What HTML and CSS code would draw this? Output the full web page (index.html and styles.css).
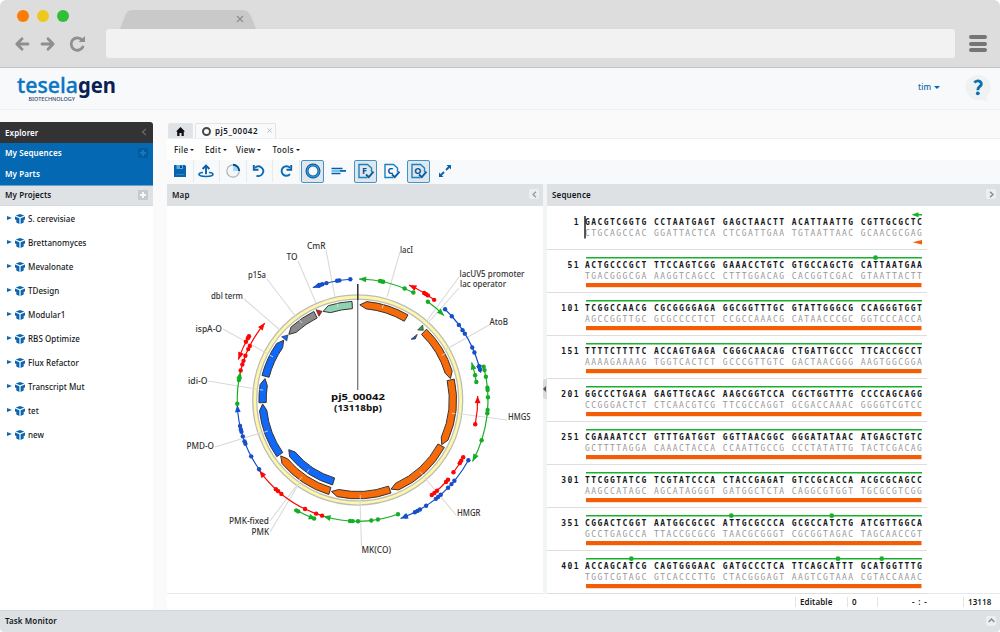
FILE: index.html
```
<!DOCTYPE html>
<html lang="en">
<head>
<meta charset="utf-8">
<title>TeselaGen</title>
<link rel="stylesheet" href="styles.css">
</head>
<body>
<svg class="defs" width="0" height="0">
  <symbol id="cube" viewBox="0 0 10 10"><path d="M5 0 9.300 1.600 5 3.300.7 1.600z"/><path d="M0 2.600 4.400 4.300V10L1.300 8.500V6L0 5.500zM10 2.600 5.600 4.300V10L8.700 8.500V6L10 5.500z"/></symbol>
</svg>
<div class="app">
  <div class="chrome">
    <div class="chrome-top">
      <i class="light orange"></i><i class="light yellow"></i><i class="light green"></i>
      <svg class="chrome-tab" width="136" height="19" viewBox="0 0 136 19"><path d="M0 19 5 6Q7 0 12 0H123Q128 0 131 6L136 19z" fill="#c9c9c9"/><path d="M117 6l6 6M123 6l-6 6" stroke="#8c8c8c" stroke-width="1.1"/></svg>
    </div>
    <div class="chrome-bar">
      <svg width="90" height="20" viewBox="0 0 90 20" fill="none" stroke="#8f8f8f" stroke-width="2.8" stroke-linecap="round" stroke-linejoin="round"><path d="M13 10H2M7 4.8 1.8 10 7 15.2"/><path d="M27 10h11M33 4.8 38.2 10 33 15.2"/><path d="M67.800 13a6.200 6.200 0 1 1-.7-7"/><path d="M63.500 8 70 2v6z" fill="#8f8f8f" stroke="none"/></svg>
      <div class="address"></div>
      <div class="burger"><i></i><i></i><i></i></div>
    </div>
  </div>

  <div class="header">
    <svg class="logo" width="110" height="40" viewBox="0 0 110 40">
      <text x="7" y="25" font-size="21.500" textLength="61" lengthAdjust="spacingAndGlyphs" fill="#0a76c2" stroke="#0a76c2" stroke-width=".35">tesela</text>
      <text x="68" y="25" font-size="21.500" font-weight="700" textLength="38" lengthAdjust="spacingAndGlyphs" fill="#0a2052">gen</text>
      <text x="18.500" y="33" font-size="5.800" textLength="46.500" lengthAdjust="spacingAndGlyphs" fill="#33466f">BIOTECHNOLOGY</text>
    </svg>
    <div class="user">tim <i class="caret"></i></div>
    <svg class="help" width="26" height="28" viewBox="0 0 26 28"><path d="M13 0a13 12.500 0 1 0 4 24.500l5.500 2-1-4.500A12.800 12.500 0 0 0 13 0z" fill="#eef2f3"/><path d="M9.300 7.500Q12.500 5 15 6.500c2.500 1.800 1.200 4.200-.5 5.300-1.200.8-1.700 1.500-1.700 3.400" fill="none" stroke="#0a70b4" stroke-width="2.800"/><circle cx="12.800" cy="18.300" r="1.900" fill="#0a70b4"/></svg>
  </div>

  <div class="main">
    <aside class="sidebar">
      <div class="side-head">Explorer<svg width="6" height="8" viewBox="0 0 6 8"><path d="M5 1 1.500 4 5 7" fill="none" stroke="#666" stroke-width="1.400"/></svg></div>
      <div class="side-blue"><span>My Sequences<b class="plus dark"></b></span><span>My Parts</span></div>
      <div class="side-proj">My Projects<b class="plus"></b></div>
      <ul class="tree" id="tree"></ul>
    </aside>

    <section class="work">
      <div class="tabs">
        <div class="tab home"><svg width="9" height="9" viewBox="0 0 9 9"><path d="M4.500 0 9 4.500H7.800V9H5.500V6h-2v3H1.200V4.500H0z" fill="#111"/></svg></div>
        <div class="tab current"><i class="ring"></i><span>pj5_00042</span><svg width="5" height="5" viewBox="0 0 5 5"><path d="M.5.5l4 4M4.500.5l-4 4" stroke="#aaa" stroke-width=".8"/></svg></div>
      </div>
      <div class="menu"><span>File<i class="caret"></i></span><span>Edit<i class="caret"></i></span><span>View<i class="caret"></i></span><span>Tools<i class="caret"></i></span></div>
      <div class="toolbar">
        <div class="tool sep"><svg viewBox="0 0 18 18"><path d="M3 3h11l1 1.500v10.500H3z" fill="#0a62ae"/><path d="M5.500 3h6.500v4H5.500z" fill="#58aee0"/><path d="M9 3.500h1.800v2.600H9z" fill="#063d79"/><path d="M5 12.500h8.500" stroke="#2586c8" stroke-width="1"/></svg></div>
        <div class="tool sep"><svg viewBox="0 0 18 18"><path d="M6 10.500C3.500 10.700 2 11.500 2 12.300c0 1.300 3 2.200 7 2.200s7-.9 7-2.200c0-.8-1.500-1.600-4-1.800" fill="none" stroke="#0a6ab4" stroke-width="1.700"/><path d="M9 12.300V4.500M5.600 7 9 3.500 12.400 7" fill="none" stroke="#0a62ae" stroke-width="1.900"/></svg></div>
        <div class="tool sep"><svg viewBox="0 0 18 18"><circle cx="9" cy="9" r="6.200" fill="#f4f6f7" stroke="#aab3b9" stroke-width="1.200"/><path d="M9 9V3a6 6 0 0 1 6 6z" fill="#9bdcf6"/><path d="M9 2.800a6.200 6.200 0 0 1 6.200 6.200" fill="none" stroke="#074f8c" stroke-width="2"/></svg></div>
        <div class="tool sep"><svg viewBox="0 0 18 18"><path d="M5 5.800a4.800 4.800 0 1 1 1.500 7.800" fill="none" stroke="#0a6ab4" stroke-width="1.900"/><path d="M3.800 3v4.700h4.700" fill="none" stroke="#0a62ae" stroke-width="1.900"/></svg></div>
        <div class="tool sep"><svg viewBox="0 0 18 18"><path d="M13 12.200a4.800 4.800 0 1 1 0-6.400" fill="none" stroke="#0a6ab4" stroke-width="1.900"/><path d="M14.200 3v4.700H9.500" fill="none" stroke="#0a62ae" stroke-width="1.900"/></svg></div>
        <div class="tool"><div class="pressed"><svg viewBox="0 0 18 18"><circle cx="9" cy="9" r="6" fill="#f7f9fb" stroke="#074f96" stroke-width="3"/><circle cx="9" cy="9" r="5.900" fill="none" stroke="#2e9bd9" stroke-width="1.400"/></svg></div></div>
        <div class="tool"><svg viewBox="0 0 18 18"><path d="M1.500 6.500h11M1.500 11.500h9" stroke="#0a5ba6" stroke-width="1.700"/><path d="M1.500 9h14.500" stroke="#54c0ed" stroke-width="1.800"/><path d="M10 8.800h6" stroke="#0a5ba6" stroke-width="1.500"/></svg></div>
        <div class="tool"><div class="pressed"><svg viewBox="0 0 18 18"><path d="M10.500 15.500H2v-13h8.500L14.500 6v4" fill="none" stroke="#1683c4" stroke-width="1.400"/><text x="5" y="12" class="glyph">F</text><path d="M9 12.500 11.800 15.200l4.700-5.500" fill="none" stroke="#075da6" stroke-width="1.900"/></svg></div></div>
        <div class="tool"><svg viewBox="0 0 18 18"><path d="M10.500 15.500H2v-13h8.500L14.500 6v4" fill="none" stroke="#1683c4" stroke-width="1.400"/><text x="4.600" y="12" class="glyph">C</text><path d="M9 12.500 11.800 15.200l4.700-5.500" fill="none" stroke="#075da6" stroke-width="1.900"/></svg></div>
        <div class="tool"><div class="pressed"><svg viewBox="0 0 18 18"><path d="M10.500 15.500H2v-13h8.500L14.500 6v4" fill="none" stroke="#1683c4" stroke-width="1.400"/><text x="4.300" y="12" class="glyph">O</text><path d="M9 12.500 11.800 15.200l4.700-5.500" fill="none" stroke="#075da6" stroke-width="1.900"/></svg></div></div>
        <div class="tool"><svg viewBox="0 0 18 18"><path d="M10 8l4-4M8 10l-4 4" stroke="#0a62ae" stroke-width="1.800"/><path d="M10.500 3H15v4.500zM3 10.500V15h4.500z" fill="#0a62ae"/></svg></div>
      </div>
      <div class="panels">
        <div class="panel map-panel">
          <div class="panel-head">Map<span class="chev"><svg width="5" height="7" viewBox="0 0 5 7"><path d="M4 .7 1 3.500 4 6.300" fill="none" stroke="#999" stroke-width="1.400"/></svg></span></div>
          <svg class="map" id="map" width="376" height="387" viewBox="167 206 376 387"></svg>
        </div>
        <div class="splitter"><i></i></div>
        <div class="panel seq-panel">
          <div class="panel-head">Sequence<span class="chev"><svg width="5" height="7" viewBox="0 0 5 7"><path d="M1 .7 4 3.500 1 6.300" fill="none" stroke="#888" stroke-width="1.400"/></svg></span></div>
          <div class="rows" id="rows"></div>
        </div>
      </div>
      <div class="status"><span class="s1">Editable</span><span class="s2">0</span><span class="s3">- : -</span><span class="s4">13118</span></div>
    </section>
  </div>
  <div class="footer">Task Monitor<span class="chev"><svg width="7" height="5" viewBox="0 0 7 5"><path d="M.7 4 3.500 1 6.300 4" fill="none" stroke="#888" stroke-width="1.400"/></svg></span></div>
</div>
<script src="app.js"></script>
</body>
</html>
```
FILE: styles.css
```
* { box-sizing: border-box; }
body { margin: 0; background: #fff; font-family: "Noto Sans", "Open Sans", sans-serif; font-size: 8px; font-weight: 600; color: #15181b; }
.defs { position: absolute; }
.app { width: 1000px; height: 632px; display: flex; flex-direction: column; overflow: hidden; background: #fafafa; border-radius: 6px 6px 4px 4px; }
.chrome { height: 68px; background: #ddd; border-bottom: 1px solid #c2c2c2; flex: none; }
.chrome-top { display: flex; height: 29px; padding: 10px 0 0 17px; gap: 8px; }
.light { width: 12px; height: 12px; border-radius: 50%; }
.orange { background: #fb7d02; }
.yellow { background: #edc81f; }
.green { background: #32be39; }
.chrome-tab { margin-left: 43px; }
.chrome-bar { display: flex; height: 29px; align-items: center; padding-left: 15px; }
.chrome-bar > svg { margin-top: 1px; }
.address { width: 849px; height: 29px; margin-left: 1px; background: #f2f2f2; border-radius: 3px; }
.burger { display: flex; flex-direction: column; gap: 2.500px; margin-left: 14px; }
.burger i { width: 18px; height: 4px; border-radius: 2px; background: #757575; }
.header { height: 42px; flex: none; display: flex; background: #f7f9fb; border-bottom: 1px solid #edf0f1; }
.logo { margin-left: 10px; font-weight: 500; }
.user { margin: 13px 0 0 798px; width: 48px; color: #0a66b0; font-size: 8px; letter-spacing: .1px; font-weight: 500; white-space: nowrap; }
.caret { display: inline-block; border: 2px solid transparent; border-top: 2.500px solid currentColor; border-bottom: 0; margin-left: 3px; vertical-align: 2px; }
.user .caret { border-left-width: 3px; border-right-width: 3px; border-top-width: 3px; margin-left: 1px; vertical-align: 1px; }
.help { margin: 7px 0 0 -1px; }
.main { flex: 1; display: flex; gap: 14px; min-height: 0; padding-top: 12px; }
.sidebar { width: 153px; background: #fff; letter-spacing: .1px; }
.side-head { height: 21px; background: #333234; color: #fff; padding: 0 6px 1px 5px; display: flex; align-items: center; justify-content: space-between; border-radius: 0 3px 0 0; }
.side-blue { background: #0469b2; color: #fff; height: 43px; display: flex; flex-direction: column; border-bottom: 1px solid #64a5d0; }
.side-blue span { height: 21px; padding: 0 5px 2px; display: flex; align-items: center; justify-content: space-between; }
.side-proj { height: 20px; background: #dfe2e5; padding: 0 5px 2px; display: flex; align-items: center; justify-content: space-between; border-bottom: 1px solid #d6dade; }
.plus { width: 10px; height: 10px; border-radius: 1px; color: #f6f7f8; background: linear-gradient(currentColor, currentColor) center / 6px 2px no-repeat, linear-gradient(currentColor, currentColor) center / 2px 6px no-repeat, #c6c9cc; }
.plus.dark { color: #0f7abf; background-color: #075a9c; }
.tree { margin: 0; padding: 0; list-style: none; font-weight: 500; letter-spacing: .05px; }
.tree li { height: 24px; display: flex; align-items: center; padding-left: 7px; }
.tree .arrow { width: 0; height: 0; border: 2.600px solid transparent; border-left: 5px solid #0a66b0; border-right: 0; }
.tree svg { width: 10px; height: 10px; margin: 2px 3px 0 3px; fill: #0a66b0; }
.work { width: 833px; display: flex; flex-direction: column; background: #f5f7f8; }
.tabs { display: flex; gap: 2px; height: 16px; padding-left: 1px; background: #fafafa; }
.tab { height: 15px; margin-top: 1px; border: 1px solid #e2e5e8; border-bottom: 0; border-radius: 2px 2px 0 0; display: flex; align-items: center; }
.home { width: 25px; justify-content: center; background: #dfe2e6; }
.current { width: 81px; background: #f8fafb; padding-left: 6px; font-weight: 600; letter-spacing: .55px; padding-bottom: 2px; }
.ring { width: 9px; height: 9px; border: 2px solid #484848; border-radius: 50%; margin: 2px 4px 0 0; flex: none; }
.current span { width: 52px; flex: none; }
.menu { height: 22px; background: #fff; border-top: 1px solid #edf0f2; display: flex; align-items: center; font-weight: 500; padding-bottom: 1px; }
.menu span { white-space: nowrap; letter-spacing: .35px; }
.menu span:nth-child(1) { margin-left: 7px; width: 31px; }
.menu span:nth-child(2) { width: 31px; }
.menu span:nth-child(3) { width: 36.500px; }
.menu .caret { margin-left: 1.500px; }
.toolbar { height: 24px; display: flex; background: #f7f9fa; }
.tool { width: 26.500px; height: 22px; display: flex; align-items: center; justify-content: center; flex: none; }
.tool svg { width: 18px; height: 18px; flex: none; }
.sep { border-right: 1px solid #e8ebed; }
.pressed { width: 23px; height: 23px; background: #e1e6ea; border: 1px solid #3d95cb; border-radius: 2px; display: flex; align-items: center; justify-content: center; flex: none; }
.glyph { font: 700 9px "Noto Sans", sans-serif; fill: #064f94; }
.panels { display: flex; height: 410px; }
.panel { display: flex; flex-direction: column; background: #fff; border-bottom: 1px solid #e6eaeb; }
.panel-head { height: 22px; flex: none; padding: 0 4px 2px 5px; background: #dde1e4; display: flex; align-items: center; justify-content: space-between; letter-spacing: .15px; }
.chev { width: 10px; height: 10px; border-radius: 2px; background: #eceeef; display: flex; align-items: center; justify-content: center; }
.map-panel { width: 376px; }
.map text { font-size: 8px; font-weight: 500; fill: #333; }
.map .title { font-size: 9.500px; font-weight: 700; fill: #111; }
.splitter { width: 4px; background: #f2f5f6; display: flex; align-items: center; }
.splitter i { width: 4px; height: 20px; background: #d7dbde; border-radius: 2px 0 0 2px; }
.splitter i::before { content: ""; display: block; margin-top: 7px; width: 0; border: 3px solid transparent; border-left: 0; border-right: 3px solid #555; }
.seq-panel { width: 453px; }
.rows { padding-top: 1px; }
.row { width: 380px; height: 43px; border-bottom: 1px solid #dedede; display: grid; grid-template-columns: 38px 1fr; position: relative; font: 700 8px/11px "DejaVu Sans Mono", monospace; letter-spacing: 1.450px; white-space: pre; padding-top: 10px; }
.row .num { width: 33px; text-align: right; }
.row .comp { color: #999; font-weight: 400; }
.row .marks { position: absolute; left: 0; top: 0; }
.status { height: 16px; background: #fff; display: flex; align-items: center; letter-spacing: .1px; justify-content: flex-end; }
.status span { height: 10px; line-height: 9px; border-left: 1px solid #e3e3e3; padding-left: 4px; white-space: nowrap; }
.s1 { width: 52px; }
.s2 { width: 30px; }
.status .s3 { width: 86px; padding-left: 34px; letter-spacing: .8px; }
.s4 { width: 37px; }
.footer { height: 22px; flex: none; background: #dde1e4; border-top: 1px solid #d3d8db; display: flex; align-items: center; justify-content: space-between; padding: 0 4px 2px 5px; letter-spacing: .1px; }
```
FILE: app.js
```
const projects = ['S. cerevisiae', 'Brettanomyces', 'Mevalonate', 'TDesign', 'Modular1', 'RBS Optimize', 'Flux Refactor', 'Transcript Mut', 'tet', 'new'];
document.getElementById('tree').innerHTML = projects.map(p =>
  `<li><i class="arrow"></i><svg><use href="#cube"/></svg>${p}</li>`).join('');

/* Sequence rows: bases, plus x positions of start codons on the reading frame line */
const rows = [
  ['GACGTCGGTG CCTAATGAGT GAGCTAACTT ACATTAATTG CGTTGCGCTC', null],
  ['ACTGCCCGCT TTCCAGTCGG GAAACCTGTC GTGCCAGCTG CATTAATGAA', [328.5]],
  ['TCGGCCAACG CGCGGGGAGA GGCGGTTTGC GTATTGGGCG CCAGGGTGGT', []],
  ['TTTTCTTTTC ACCAGTGAGA CGGGCAACAG CTGATTGCCC TTCACCGCCT', []],
  ['GGCCCTGAGA GAGTTGCAGC AAGCGGTCCA CGCTGGTTTG CCCCAGCAGG', []],
  ['CGAAAATCCT GTTTGATGGT GGTTAACGGC GGGATATAAC ATGAGCTGTC', []],
  ['TTCGGTATCG TCGTATCCCA CTACCGAGAT GTCCGCACCA ACGCGCAGCC', []],
  ['CGGACTCGGT AATGGCGCGC ATTGCGCCCA GCGCCATCTG ATCGTTGGCA', [184.3, 284.7]],
  ['ACCAGCATCG CAGTGGGAAC GATGCCCTCA TTCAGCATTT GCATGGTTTG', [84.3, 291, 334.7]]
];
const pair = { A: 'T', T: 'A', G: 'C', C: 'G', ' ': ' ' };
document.getElementById('rows').innerHTML = rows.map(([s, dots], i) => {
  const comp = [...s].map(c => pair[c]).join('');
  const marks = dots
    ? `<path d="M39 7.700H375" stroke="#18b12c" stroke-width="1.400"/>${dots.map(x => `<circle cx="${x}" cy="7.700" r="2.400" fill="#18b12c"/>`).join('')}<rect x="39" y="33" width="335.500" height="4.200" fill="#f35d05"/>`
    : '<path d="M38 9v22.500" stroke="#000" stroke-width="1.300"/><path d="M369 7.700h6" stroke="#18b12c" stroke-width="1.400"/><path d="M364.500 7.700l7-2.500v5z" fill="#18b12c"/><path d="M365.500 35.200l9.500-2.200v4.400z" fill="#f35d05"/>';
  return `<div class="row"><span class="num">${i * 50 + 1}</span><div><div>${s}</div><div class="comp">${comp}</div></div><svg class="marks" width="380" height="42">${marks}</svg></div>`;
}).join('');

/* Plasmid map */
const CX = 357.7, CY = 400;
const pt = (r, a) => [CX + r * Math.sin(a * Math.PI / 180), CY - r * Math.cos(a * Math.PI / 180)];
const P = (r, a) => pt(r, a).map(v => v.toFixed(2)).join(' ');
const angle = (x, y) => (Math.atan2(x - CX, CY - y) * 180 / Math.PI + 360) % 360;
let out = '';

const labels = [
  ['lacI', 400, 253, 13, [400, 252, 387, 297]],
  ['lacUV5 promoter', 459.5, 276.5, 65, [459, 277, 426, 322]],
  ['lac operator', 460, 287, 46, [459, 288, 428, 323]],
  ['AtoB', 489.5, 325, 18.5, [489, 325, 445, 350]],
  ['HMGS', 508, 420, 22.5, [507, 420, 454, 413]],
  ['HMGR', 457, 515.5, 23.5, [456, 515, 425, 478]],
  ['MK(CO)', 361.5, 553, 29.5, [361.5, 546, 360, 500]],
  ['PMK-fixed', 229, 524, 40, [270, 521, 297, 485]],
  ['PMK', 251.5, 534.5, 17.5, [270, 532, 300, 482]],
  ['PMD-O', 186.5, 449, 27.5, [215, 447, 264, 432]],
  ['idi-O', 188, 384, 19.5, [208, 381, 262, 390]],
  ['ispA-O', 195.5, 332, 26.5, [223, 329, 268, 354]],
  ['dbl term', 211, 299, 32, [244, 299, 280, 330]],
  ['p15a', 248, 278, 18, [267, 279, 296, 317]],
  ['TO', 286.5, 260, 11, [298, 261, 316, 303]],
  ['CmR', 307, 249, 18.5, [326, 250, 335, 297]]
];
out += `<circle cx="${CX}" cy="${CY}" r="103" fill="none" stroke="#bcbcbc" stroke-width="5.300"/><circle cx="${CX}" cy="${CY}" r="103" fill="none" stroke="#fdf7a8" stroke-width="2.800"/>`;
labels.forEach(([, , , , l]) => out += `<path d="M${l[0]} ${l[1]}L${l[2]} ${l[3]}" stroke="#dadada" stroke-width="1.100"/>`);

/* tail angle, tip angle, colour, inner radius, tick angle */
const features = [
  [30.6, 1.3, '#f56a09', 91.5, 15],
  [44.2, 77, '#f56a09', 91.5, 62],
  [77.8, 118, '#f56a09', 91.5, 98],
  [118.7, 159.5, '#f56a09', 91.5, 139],
  [160.3, 196, '#f56a09', 91.5, 178.5],
  [197, 234, '#f56a09', 91.5, 216],
  [196.5, 234.2, '#0f68f8', 81.3, 215],
  [235, 267.6, '#0f68f8', 91.5, 251],
  [268.4, 283, '#0f68f8', 91.5, 276],
  [284.4, 308.9, '#0f68f8', 91.5, 297],
  [333.7, 313.6, '#8a8a8a', 91.5, 324],
  [356.7, 338.7, '#8ed3b4', 91.5, 348]
];
features.forEach(([a, b, color, r0, tick]) => {
  const r1 = r0 + 7.3, dir = b > a ? 1 : -1, neck = b - dir * 4;
  out += `<path d="M${P(r1, a)}A${r1} ${r1} 0 0 ${dir > 0 ? 1 : 0} ${P(r1, neck)}L${P((r0 + r1) / 2, b)}L${P(r0, neck)}A${r0} ${r0} 0 0 ${dir > 0 ? 0 : 1} ${P(r0, a)}z" fill="${color}" stroke="#3a3230" stroke-width="1"/>`;
  out += `<path d="M${P(r0 + 3.5, tick)}L${P(r1, tick)}" stroke="#ddd" stroke-width=".9"/>`;
});
[['281.7 336.7 288 335 286.7 341', '#0f68f8'], ['316 309.7 322 311.300 319 316.300', '#e01515'], ['417.700 330 422.700 325 423.300 330.300', '#2f9b45'], ['411 339.300 417.300 334.300 415.300 339', '#2456c8']]
  .forEach(([p, c]) => out += `<polygon points="${p}" fill="${c}" stroke="#333" stroke-width=".7"/>`);

/* Reading frames: radius, colour, arrow tip, codon positions from far end */
const G = '#14ad24', R = '#fb0505', B = '#164fc9';
const frames = [
  [121, G, [359, 279], [[413.3, 292.7], [404.7, 288.3], [383.3, 281.3], [381.5, 281], [380, 280.7]]],
  [126, R, [409, 285], [[434, 300], [428, 295.3], [426, 294.3], [424.3, 292.7]]],
  [120.7, G, [444, 315.7], [[428, 301.7]]],
  [126, B, [479.5, 373], [[445, 309.3], [451.7, 316.3], [458.7, 325], [462.3, 330.3], [464.3, 334], [471.7, 347.7], [474, 352.7], [478.7, 366.3], [479, 370]]],
  [120, G, [472, 362.3], [[476.3, 382], [475, 375.3]]],
  [130.3, G, [473.3, 462], [[484, 366.7], [485, 370], [486, 376.7], [487.7, 387.7], [487.7, 390], [488, 397.3], [487.7, 410], [487.7, 413.3], [481.7, 440.3]]],
  [120, R, [477.7, 396], [[475.3, 424.3]]],
  [120, R, null, [[463.3, 457.3], [461.3, 460.7], [460, 463.3], [454, 472.7]]],
  [126, B, [400.7, 519], [[468, 460], [454.3, 480.7], [451.7, 484.3], [448.3, 488], [441, 495], [438.3, 497.3], [436, 499], [426.3, 506], [420, 509.7], [417.7, 511.3], [415.3, 513], [406, 517]]],
  [120.5, R, null, [[448.3, 480], [446, 482], [437.3, 491], [434.7, 493.3], [432, 495.3]]],
  [121.2, G, [323.3, 516.7], [[398, 514.3], [378, 519.7], [371.3, 520.7], [358, 521.3], [352.7, 521.3], [350, 521.3]]],
  [126.3, G, [316, 519.5], [[296.3, 510.3], [298.3, 511.3], [314, 518.7]]],
  [121, R, [259.3, 470.7], [[322, 516], [316, 514], [305, 509], [281.3, 494], [278.3, 491], [276, 489]]],
  [120.5, B, [237.7, 405], [[259, 469.3], [251.3, 456.3], [245.7, 443.7], [244.7, 441.3], [243, 436.3], [242, 431.7], [241.3, 429.3], [240.3, 426]]],
  [120.5, G, [240.3, 371.7], [[237.7, 403.7], [239.3, 380]]],
  [120.7, R, [264.7, 323], [[241.3, 370.7], [243, 364.7], [244, 361], [246, 356], [248.7, 349.3], [250, 346]]],
  [126, R, [239.3, 360], [[249, 336.3], [248, 338.3], [246.3, 342]]],
  [121, B, [312.7, 287.3], [[350.3, 279], [339.3, 280.3], [337, 280.3], [326.3, 282.7], [322.3, 284.3], [320, 285]]]
];
frames.forEach(([r, c, tip, dots]) => {
  const a = angle(...dots[0]), b = angle(...(tip || dots[dots.length - 1]));
  const dir = ((b - a + 540) % 360) - 180 > 0 ? 1 : -1;
  out += `<path d="M${P(r, a)}A${r} ${r} 0 0 ${dir > 0 ? 1 : 0} ${P(r, b)}" fill="none" stroke="${c}" stroke-width="1.200"/>`;
  dots.forEach(d => { const [x, y] = pt(r, angle(...d)); out += `<circle cx="${x.toFixed(2)}" cy="${y.toFixed(2)}" r="2.200" fill="${c}"/>`; });
  if (tip) out += `<path d="M${P(r, b)}L${P(r + 2.9, b - dir * 3.4)}L${P(r - 2.9, b - dir * 3.4)}z" fill="${c}"/>`;
});
labels.forEach(([t, x, y, w]) => out += `<text x="${x}" y="${y}" textLength="${w}" lengthAdjust="spacingAndGlyphs">${t}</text>`);
out += `<path d="M${CX} 284V390" stroke="#777" stroke-width="1.300"/><path d="M${CX} 284V300" stroke="#333" stroke-width="1.400"/>`;
out += '<text class="title" x="331" y="400" textLength="54" lengthAdjust="spacingAndGlyphs">pj5_00042</text><text class="title" x="334" y="410.500" textLength="48" lengthAdjust="spacingAndGlyphs">(13118bp)</text>';
document.getElementById('map').innerHTML = out;
```
